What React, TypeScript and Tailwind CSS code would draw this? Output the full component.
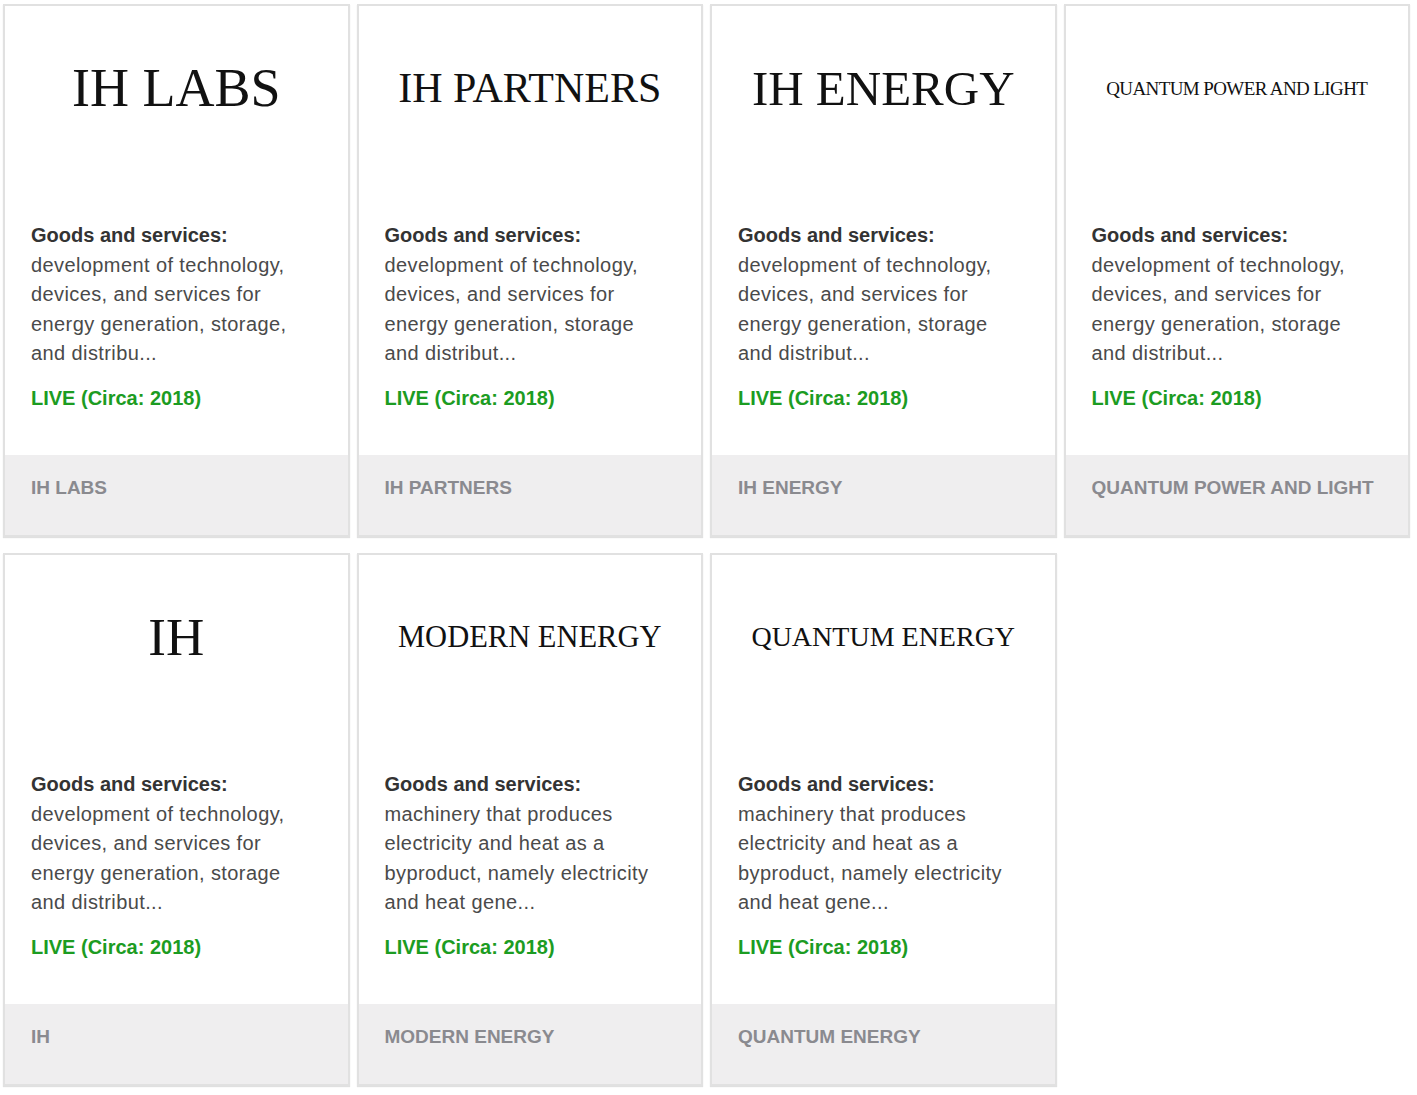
import React from "react";

type Company = {
  logo: string;
  logoClass: string;
  name: string;
  lines: string[];
};

const techLines = [
  "development of technology,",
  "devices, and services for",
  "energy generation, storage",
  "and distribut...",
];

const machineLines = [
  "machinery that produces",
  "electricity and heat as a",
  "byproduct, namely electricity",
  "and heat gene...",
];

const companies: Company[] = [
  {
    logo: "IH LABS",
    logoClass: "text-[54px]",
    name: "IH LABS",
    lines: [
      "development of technology,",
      "devices, and services for",
      "energy generation, storage,",
      "and distribu...",
    ],
  },
  { logo: "IH PARTNERS", logoClass: "text-[42px]", name: "IH PARTNERS", lines: techLines },
  { logo: "IH ENERGY", logoClass: "text-[49px]", name: "IH ENERGY", lines: techLines },
  {
    logo: "QUANTUM POWER AND LIGHT",
    logoClass: "text-[19px] tracking-[-0.6px] text-[#2a2a2a]",
    name: "QUANTUM POWER AND LIGHT",
    lines: techLines,
  },
  { logo: "IH", logoClass: "text-[53px]", name: "IH", lines: techLines },
  { logo: "MODERN ENERGY", logoClass: "text-[30.5px]", name: "MODERN ENERGY", lines: machineLines },
  { logo: "QUANTUM ENERGY", logoClass: "text-[28px]", name: "QUANTUM ENERGY", lines: machineLines },
];

function CompanyCard({ c }: { c: Company }) {
  return (
    <div className="flex flex-col border-2 border-[#e1e1e1] bg-white shadow-[0_1px_1px_rgba(0,0,0,0.12)]">
      <div className="h-[164px] flex items-center justify-center">
        <span
          className={`font-['Liberation_Serif',serif] leading-none text-[#111] whitespace-nowrap ${c.logoClass}`}
        >
          {c.logo}
        </span>
      </div>
      <div className="h-[285px] pt-[51px] px-[26px] font-['Liberation_Sans',Arial,sans-serif] text-[20px] leading-[29.5px]">
        <p className="font-bold text-[#333]">Goods and services:</p>
        {c.lines.map((l) => (
          <p key={l} className="text-[#4a4a4a] whitespace-nowrap tracking-[0.4px]">
            {l}
          </p>
        ))}
        <p className="mt-[15px] font-bold text-[#1c9c22]">LIVE (Circa: 2018)</p>
      </div>
      <div className="h-[80px] bg-[#efeeef] px-[26px] pt-[21px] font-['Liberation_Sans',Arial,sans-serif] text-[19px] leading-[24px] font-bold text-[#8a8a8f]">
        {c.name}
      </div>
    </div>
  );
}

export default function App() {
  return (
    <div className="min-h-screen bg-white pl-[3px] pt-[4px]">
      <div className="w-[1407px] grid grid-cols-4 gap-x-[7px] gap-y-[16px]">
        {companies.map((c) => (
          <CompanyCard key={c.name} c={c} />
        ))}
      </div>
    </div>
  );
}
